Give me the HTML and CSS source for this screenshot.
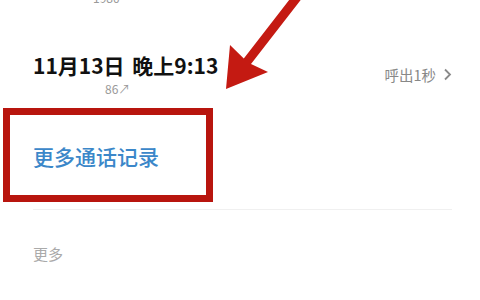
FILE: index.html
```html
<!DOCTYPE html>
<html lang="zh-CN">
<head>
    <meta charset="UTF-8">
    <meta name="viewport" content="width=device-width, initial-scale=1.0">
    <title>通话记录</title>
    <link rel="stylesheet" href="styles.css">
</head>
<body>
    <div class="page">
        <div class="prev-sub">1980</div>

        <div class="record">
            <div class="record-main">
                <div class="record-time">11月13日 晚上9:13</div>
                <div class="record-sub">86↗</div>
            </div>
            <div class="record-info">
                <span>呼出1秒</span>
                <svg class="chevron" width="9" height="13" viewBox="0 0 9 13">
                    <polyline points="2,1.5 7,6.5 2,11.5" fill="none" stroke="#8a8a8a" stroke-width="1.8"/>
                </svg>
            </div>
        </div>

        <div class="more-calls">更多通话记录</div>

        <div class="section-title">更多</div>
    </div>

    <!-- annotation overlay -->
    <div class="mark-box"></div>
    <svg class="mark-arrow" width="480" height="120" viewBox="0 0 480 120">
        <polygon points="294.4,-6.8 243.8,58.5 230,45 226,89 268,72 251,64.1 301.6,-1.2" fill="#c41a12"/>
    </svg>
</body>
</html>
```

FILE: styles.css
```css
* {
    margin: 0;
    padding: 0;
    box-sizing: border-box;
}

body {
    background: #fff;
    font-family: "Noto Sans CJK SC", "Noto Sans", sans-serif;
    overflow: hidden;
}

.page {
    padding: 0 28px 0 33px;
}

.prev-sub {
    margin-top: -9px;
    padding-left: 60px;
    font-size: 12px;
    line-height: 14px;
    color: #999;
}

.record {
    display: flex;
    justify-content: space-between;
    align-items: center;
    margin-top: 47px;
}

.record-time {
    font-size: 21px;
    line-height: 27px;
    font-weight: 700;
    color: #111;
    word-spacing: 3px;
}

.record-sub {
    margin-top: 2px;
    padding-left: 72px;
    font-size: 12px;
    line-height: 16px;
    color: #999;
}

.record-info {
    display: flex;
    align-items: center;
    gap: 7px;
    font-size: 14.5px;
    color: #888;
}

.more-calls {
    margin-top: 45px;
    padding-bottom: 39px;
    border-bottom: 1px solid #f0f0f0;
    font-size: 21px;
    line-height: 28px;
    font-weight: 500;
    color: #3b87c9;
}

.section-title {
    margin-top: 34px;
    font-size: 15px;
    line-height: 20px;
    color: #aaa;
}

.mark-box {
    position: absolute;
    left: 3px;
    top: 108px;
    width: 210px;
    height: 94px;
    border: 7px solid #b8150e;
}

.mark-arrow {
    position: absolute;
    left: 0;
    top: 0;
}
```
